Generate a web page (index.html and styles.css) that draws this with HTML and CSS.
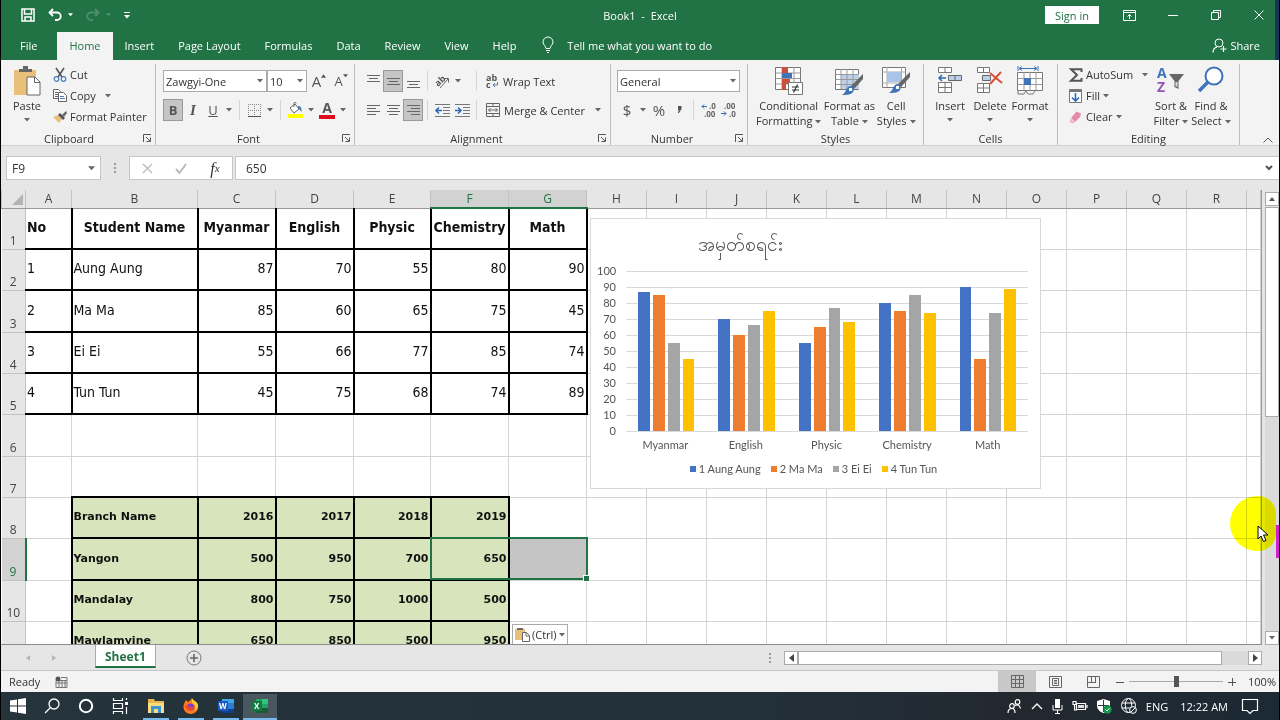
FILE: index.html
```html
<!DOCTYPE html>
<html lang="en">
<head>
    <meta charset="UTF-8">
    <meta name="viewport" content="width=device-width, initial-scale=1.0">
    <title>Book1 - Excel</title>
    <link rel="stylesheet" href="styles.css">
</head>
<body>
    <svg class="defs" aria-hidden="true">
        <symbol id="caret" viewBox="0 0 6 4"><path d="M0 0h6L3 3.5z"/></symbol>
        <symbol id="launcher" viewBox="0 0 9 9"><path d="M.5 8V.5H8M3 3l4 4M7.5 3.5v4h-4" fill="none" stroke="#555"/></symbol>
    </svg>

    <header class="title-bar">
        <div class="quick-access">
            <button class="qa-btn" aria-label="Save"><svg width="14" height="14" viewBox="0 0 14 14"><path d="M1 1h12v12H1zM3.500 1v5h7V1M4 13V9h6v4" fill="none" stroke="#fff" stroke-width="1.500"/></svg></button>
            <button class="qa-btn" aria-label="Undo"><svg width="14" height="14" viewBox="0 0 14 14"><path d="M5 1L1.500 4.500 5 8M2 4.500h7a3.500 3.500 0 0 1 0 7.500H7" fill="none" stroke="#fff" stroke-width="1.800"/></svg><svg class="caret" width="5" height="4"><use href="#caret"/></svg></button>
            <button class="qa-btn faded" aria-label="Redo"><svg width="14" height="14" viewBox="0 0 14 14"><path d="M9 1l3.500 3.500L9 8M12 4.500H5A3.500 3.500 0 0 0 5 12h2" fill="none" stroke="#fff" stroke-width="1.800"/></svg><svg class="caret" width="5" height="4"><use href="#caret"/></svg></button>
            <button class="qa-btn" aria-label="Customize toolbar"><svg width="6" height="7" viewBox="0 0 6 7"><path d="M0 0h6v1H0zM0 3h6L3 6.500z" fill="#fff"/></svg></button>
        </div>
        <div class="doc-title">Book1&nbsp; -&nbsp; Excel</div>
        <div class="window-tools">
            <button class="sign-in">Sign in</button>
            <button class="win-btn" aria-label="Ribbon options"><svg width="13" height="11" viewBox="0 0 13 11"><path d="M.5.5h12v10H.5zM.5 2.500h12M6.500 9V4.500M4.500 6.500l2-2 2 2" fill="none" stroke="#fff"/></svg></button>
            <button class="win-btn" aria-label="Minimize"><svg width="10" height="10" viewBox="0 0 10 10"><path d="M0 5.500h10" stroke="#fff"/></svg></button>
            <button class="win-btn" aria-label="Restore"><svg width="10" height="10" viewBox="0 0 10 10"><path d="M.5 2.500h7v7h-7zM2.500 2.500v-2h7v7h-2" fill="none" stroke="#fff"/></svg></button>
            <button class="win-btn" aria-label="Close"><svg width="10" height="10" viewBox="0 0 10 10"><path d="M.5.5l9 9M9.500.5l-9 9" stroke="#fff"/></svg></button>
        </div>
    </header>

    <nav class="tabs">
        <a href="#" class="file">File</a>
        <a href="#" class="active">Home</a>
        <a href="#">Insert</a>
        <a href="#">Page Layout</a>
        <a href="#">Formulas</a>
        <a href="#">Data</a>
        <a href="#">Review</a>
        <a href="#">View</a>
        <a href="#">Help</a>
        <button class="tell-me"><svg width="12" height="16" viewBox="0 0 12 16"><path d="M4 11.500C4 9 1 8 1 5a5 5 0 0 1 10 0c0 3-3 4-3 6.500zM4 13.500h4M5 15.500h2" fill="none" stroke="#fff"/></svg>Tell me what you want to do</button>
        <button class="share"><svg width="15" height="15" viewBox="0 0 15 15"><circle cx="7" cy="5" r="4" fill="none" stroke="#fff"/><path d="M1 14.500c0-3 2-5 4-5.500M11.500 8v6M8.500 11h6" fill="none" stroke="#fff" stroke-width="1.200"/></svg>Share</button>
    </nav>

    <section class="ribbon">
        <div class="group clipboard">
            <div class="group-body">
                <button class="big">
                    <svg width="28" height="30" viewBox="0 0 28 30"><path d="M1 4h22v25H1z" fill="#e8c07a"/><path d="M6 6V3h4V0h5v3h4v3z" fill="#666"/><path d="M14 11h8l5 5v13H14z" fill="#fff" stroke="#666"/><path d="M21.500 11v5.500H27" fill="none" stroke="#666"/></svg>
                    <span>Paste</span>
                    <svg class="caret" width="6" height="4"><use href="#caret"/></svg>
                </button>
                <div class="stack">
                    <button class="line"><svg width="14" height="14" viewBox="0 0 14 14"><path d="M3 0l6 9M11 0L5 9" stroke="#555" stroke-width="1.600"/><circle cx="3.500" cy="11" r="2.300" fill="none" stroke="#4a7ebb" stroke-width="1.200"/><circle cx="10.500" cy="11" r="2.300" fill="none" stroke="#4a7ebb" stroke-width="1.200"/></svg>Cut</button>
                    <button class="line"><svg width="14" height="13" viewBox="0 0 14 13"><path d="M.5.5h5l2 2v7h-7zM2 3.500h3M2 5.500h3M2 7.500h3" fill="#fff" stroke="#666"/><path d="M5.500 3.500h5l3 3v6h-8z" fill="#fff" stroke="#666"/><path d="M7 7.500h4M7 9.500h5" stroke="#4a7ebb"/></svg>Copy<svg class="caret far" width="6" height="4"><use href="#caret"/></svg></button>
                    <button class="line"><svg width="14" height="12" viewBox="0 0 14 12"><path d="M0 6l5-2 4 4-3 4z" fill="#e8c07a"/><path d="M5 4l2-2 5 5-2 2z" fill="#555"/><path d="M9 4l4-4 1 2-3 4z" fill="#666"/></svg>Format Painter</button>
                </div>
            </div>
            <div class="group-name">Clipboard<svg class="launch" width="9" height="9"><use href="#launcher"/></svg></div>
        </div>

        <div class="group font">
            <div class="group-body rows">
                <div class="tool-row">
                    <span class="combo font-name"><select aria-label="Font"><option>Zawgyi-One</option></select><svg class="caret" width="6" height="4"><use href="#caret"/></svg></span>
                    <span class="combo font-size"><select aria-label="Font size"><option>10</option></select><svg class="caret" width="6" height="4"><use href="#caret"/></svg></span>
                    <button class="tool grow" aria-label="Increase font size"><span class="letter">A</span><svg width="5" height="4" viewBox="0 0 6 4"><path d="M0 4h6L3 0z" fill="#555"/></svg></button>
                    <button class="tool grow small" aria-label="Decrease font size"><span class="letter">A</span><svg width="5" height="4"><use href="#caret"/></svg></button>
                </div>
                <div class="tool-row">
                    <button class="tool on"><b>B</b></button>
                    <button class="tool"><i class="serif">I</i></button>
                    <button class="tool"><u>U</u></button>
                    <button class="drop" aria-label="Underline style"><svg class="caret" width="6" height="4"><use href="#caret"/></svg></button>
                    <span class="sep"></span>
                    <button class="tool" aria-label="Borders"><svg width="13" height="13" viewBox="0 0 13 13"><path d="M.5 0v12M6.500 0v12M12.500 0v12M0 .5h13M0 6.500h13" stroke="#888" stroke-dasharray="1 1" fill="none"/><path d="M0 12.500h13" stroke="#555"/></svg></button>
                    <button class="drop" aria-label="Border style"><svg class="caret" width="6" height="4"><use href="#caret"/></svg></button>
                    <span class="sep"></span>
                    <button class="tool" aria-label="Fill color"><svg width="15" height="16" viewBox="0 0 15 16"><path d="M2 6l5-4 4 5-5 4z" fill="#fff" stroke="#666"/><path d="M6 5V1.500c0-1.500 2-1.500 2 0" fill="none" stroke="#666"/><path d="M10 4c3 0 4 2 3.500 6C12 9 12 7 10 6z" fill="#4a7ebb"/><path d="M0 12h15v4H0z" fill="#ff0"/></svg></button>
                    <button class="drop" aria-label="Fill colors"><svg class="caret" width="6" height="4"><use href="#caret"/></svg></button>
                    <button class="tool font-color" aria-label="Font color"><b>A</b></button>
                    <button class="drop" aria-label="Font colors"><svg class="caret" width="6" height="4"><use href="#caret"/></svg></button>
                </div>
            </div>
            <div class="group-name">Font<svg class="launch" width="9" height="9"><use href="#launcher"/></svg></div>
        </div>

        <div class="group alignment">
            <div class="group-body rows">
                <div class="tool-row">
                    <button class="tool" aria-label="Top align"><svg width="13" height="13" viewBox="0 0 13 13"><path d="M0 .5h13M2 3.500h9M0 6.500h13" stroke="#666"/></svg></button>
                    <button class="tool on" aria-label="Middle align"><svg width="13" height="13" viewBox="0 0 13 13"><path d="M0 3.500h13M2 6.500h9M0 9.500h13" stroke="#666"/></svg></button>
                    <button class="tool" aria-label="Bottom align"><svg width="13" height="13" viewBox="0 0 13 13"><path d="M0 6.500h13M2 9.500h9M0 12.500h13" stroke="#666"/></svg></button>
                    <span class="sep"></span>
                    <button class="tool" aria-label="Orientation"><svg width="16" height="15" viewBox="0 0 16 15"><text x="1" y="11" transform="rotate(-42 5 8)" class="ab">ab</text><path d="M6 14l8-9M14.500 8.500V4.500h-4" fill="none" stroke="#666"/></svg></button>
                    <button class="drop" aria-label="Orientation list"><svg class="caret" width="6" height="4"><use href="#caret"/></svg></button>
                    <span class="sep wide"></span>
                    <button class="line"><svg width="13" height="15" viewBox="0 0 13 15"><text x="0" y="7" class="ab">ab</text><text x="0" y="14" class="ab">c</text><path d="M11.500 8v3H7M9 9l-2 2 2 2" fill="none" stroke="#4a7ebb"/></svg>Wrap Text</button>
                </div>
                <div class="tool-row">
                    <button class="tool" aria-label="Align left"><svg width="13" height="13" viewBox="0 0 13 13"><path d="M0 1.500h13M0 4.500h9M0 7.500h13M0 10.500h9" stroke="#666"/></svg></button>
                    <button class="tool" aria-label="Center"><svg width="13" height="13" viewBox="0 0 13 13"><path d="M0 1.500h13M2 4.500h9M0 7.500h13M2 10.500h9" stroke="#666"/></svg></button>
                    <button class="tool on" aria-label="Align right"><svg width="13" height="13" viewBox="0 0 13 13"><path d="M0 1.500h13M4 4.500h9M0 7.500h13M4 10.500h9" stroke="#666"/></svg></button>
                    <span class="sep"></span>
                    <button class="tool" aria-label="Decrease indent"><svg width="15" height="13" viewBox="0 0 15 13"><path d="M0 .5h15M8 3.500h7M8 6.500h7M8 9.500h7M0 12.500h15" stroke="#777"/><path d="M7 6.500H1M4 3.500l-3 3 3 3" fill="none" stroke="#2f6ab5" stroke-width="1.600"/></svg></button>
                    <button class="tool" aria-label="Increase indent"><svg width="15" height="13" viewBox="0 0 15 13"><path d="M0 .5h15M8 3.500h7M8 6.500h7M8 9.500h7M0 12.500h15" stroke="#777"/><path d="M0 6.500h6M3 3.500l3 3-3 3" fill="none" stroke="#2f6ab5" stroke-width="1.600"/></svg></button>
                    <span class="sep"></span>
                    <button class="line"><svg width="14" height="14" viewBox="0 0 14 14"><path d="M.5.5h13v13H.5zM.5 3.500h13M.5 10.500h13M7 0v3.500M7 10.500V14M2.500 7h9M4.500 5l-2 2 2 2M9.500 5l2 2-2 2" fill="none" stroke="#666"/></svg>Merge &amp; Center<svg class="caret far" width="6" height="4"><use href="#caret"/></svg></button>
                </div>
            </div>
            <div class="group-name">Alignment<svg class="launch" width="9" height="9"><use href="#launcher"/></svg></div>
        </div>

        <div class="group number">
            <div class="group-body rows">
                <div class="tool-row">
                    <span class="combo format"><select aria-label="Number format"><option>General</option></select><svg class="caret" width="6" height="4"><use href="#caret"/></svg></span>
                </div>
                <div class="tool-row">
                    <button class="tool sign">$</button>
                    <button class="drop" aria-label="Currency list"><svg class="caret" width="6" height="4"><use href="#caret"/></svg></button>
                    <button class="tool sign">%</button>
                    <button class="tool" aria-label="Comma style"><svg width="5" height="8" viewBox="0 0 5 8"><path d="M1 0h3.500v3L2 7H.8l1-3H1z" fill="#555"/></svg></button>
                    <span class="sep"></span>
                    <button class="tool" aria-label="Increase decimal"><svg width="15" height="14" viewBox="0 0 15 14"><text x="8" y="6" class="dec">.0</text><text x="3" y="14" class="dec">.00</text><path d="M6 3.500H1M3 1.500l-2 2 2 2" fill="none" stroke="#2f6ab5"/></svg></button>
                    <button class="tool" aria-label="Decrease decimal"><svg width="15" height="14" viewBox="0 0 15 14"><text x="3" y="6" class="dec">.00</text><text x="8" y="14" class="dec">.0</text><path d="M0 10.500h5M3 8.500l2 2-2 2" fill="none" stroke="#2f6ab5"/></svg></button>
                </div>
            </div>
            <div class="group-name">Number<svg class="launch" width="9" height="9"><use href="#launcher"/></svg></div>
        </div>

        <div class="group styles">
            <div class="group-body">
                <button class="big">
                    <svg width="28" height="30" viewBox="0 0 28 30"><path d="M.5 1.500h25v22H.5z" fill="#fff" stroke="#777"/><path d="M.5 7h25M.5 12.500h25M.5 18h25M7 1v22M19 1v22" stroke="#999"/><path d="M7 1h6v6H7zM7 13h8v5H7zM7 18h4v6H7z" fill="#c9503c"/><path d="M7 7h10v5H7z" fill="#3f74b8"/><path d="M13.500 16.500h14v12h-14z" fill="#fff" stroke="#777"/><path d="M17 21h7M17 24h7M22.500 18.500l-4 8" stroke="#333" stroke-width="1.200"/></svg>
                    <span>Conditional</span>
                    <span>Formatting<svg class="caret" width="6" height="4"><use href="#caret"/></svg></span>
                </button>
                <button class="big">
                    <svg width="28" height="30" viewBox="0 0 28 30"><path d="M.5 3.500h23v20H.5z" fill="#fff" stroke="#777"/><path d="M6 8h18v15H6z" fill="#bdd0e9"/><path d="M.5 8.500h23M.5 13.500h23M.5 18.500h23M6 3v20M12 3v20M18 3v20" stroke="#999"/><path d="M28 8v5l-9 10-3-3z" fill="#666"/><path d="M15 20c3 0 5 3 3 6s-7 3-11 3c4-2 4-8 8-9z" fill="#3f74b8"/><path d="M14 22h3v3h-3z" fill="#fff"/></svg>
                    <span>Format as</span>
                    <span>Table<svg class="caret" width="6" height="4"><use href="#caret"/></svg></span>
                </button>
                <button class="big">
                    <svg width="28" height="30" viewBox="0 0 28 30"><path d="M.5 1.500h23v20H.5z" fill="#fff" stroke="#777"/><path d="M.5 6h23M.5 17h23M5 1v20M19.500 1v20" stroke="#aaa"/><path d="M5 6h14v10H5z" fill="#a9c4e6"/><path d="M28 6v5l-9 10-3-3z" fill="#666"/><path d="M15 18c3 0 5 3 3 6s-7 3-11 3c4-2 4-8 8-9z" fill="#3f74b8"/><path d="M14 20h3v3h-3z" fill="#fff"/></svg>
                    <span>Cell</span>
                    <span>Styles<svg class="caret" width="6" height="4"><use href="#caret"/></svg></span>
                </button>
            </div>
            <div class="group-name">Styles</div>
        </div>

        <div class="group cells">
            <div class="group-body">
                <button class="big">
                    <svg width="26" height="30" viewBox="0 0 26 30"><path d="M1.500 1.500h13v5h-13zM8 1v5M1.500 16.500h13v10h-13zM1.500 21.500h13M8 16v10" fill="#fff" stroke="#777"/><path d="M11.500 9.500h13v5h-13zM18 9v5" fill="#bdd0e9" stroke="#666"/><path d="M9 12H2M5 9l-3 3 3 3" fill="none" stroke="#2f6ab5" stroke-width="1.500"/></svg>
                    <span>Insert</span>
                    <svg class="caret" width="6" height="4"><use href="#caret"/></svg>
                </button>
                <button class="big">
                    <svg width="26" height="30" viewBox="0 0 26 30"><path d="M.5 1.500h12v5H.5zM6.500 1v5M.5 17.500h12v9H.5zM.5 22h12M6.500 17v9" fill="#fff" stroke="#777"/><path d="M5.500 9.500h8v5h-8z" fill="#bdd0e9" stroke="#666"/><path d="M13 7l12 10M24 6L13 18" stroke="#d9503a" stroke-width="2"/></svg>
                    <span>Delete</span>
                    <svg class="caret" width="6" height="4"><use href="#caret"/></svg>
                </button>
                <button class="big">
                    <svg width="26" height="30" viewBox="0 0 26 30"><path d="M.5 6.500h25v18H.5z" fill="#fff" stroke="#777"/><path d="M.5 12.500h25M.5 18.500h25M7 6v18M13 6v18M19 6v18" stroke="#999"/><path d="M7 12h7v7H7z" fill="#3f74b8"/><path d="M1 25v3h6l2-3 2 3h5l2-3" fill="none" stroke="#777"/><path d="M1 0v5M21 0v5M2 2.500h18M5 .5l-3 2 3 2M17 .5l3 2-3 2" fill="none" stroke="#3f74b8"/></svg>
                    <span>Format</span>
                    <svg class="caret" width="6" height="4"><use href="#caret"/></svg>
                </button>
            </div>
            <div class="group-name">Cells</div>
        </div>

        <div class="group editing">
            <div class="group-body">
                <div class="stack">
                    <button class="line"><svg width="14" height="14" viewBox="0 0 14 14"><path d="M12.500 4V1.200H2L8 7l-6 5.800h10.500V10" fill="none" stroke="#555" stroke-width="2"/></svg>AutoSum<svg class="caret far" width="6" height="4"><use href="#caret"/></svg></button>
                    <button class="line"><svg width="14" height="14" viewBox="0 0 14 14"><path d="M.5.5h12v13H.5z" fill="#fff" stroke="#777"/><path d="M1 1h11v2H1z" fill="#777"/><path d="M6.500 4v8M3 8.500L6.500 12 10 8.500" fill="none" stroke="#2f6ab5" stroke-width="1.600"/></svg>Fill<svg class="caret" width="6" height="4"><use href="#caret"/></svg></button>
                    <button class="line"><svg width="14" height="14" viewBox="0 0 14 14"><path d="M7.500 1.500L12 3.500 11 7l-5 5-4-4z" fill="#e58ba6"/><path d="M1.500 8.500l4 4-1 1-3.500-1z" fill="#eeb4c4"/></svg>Clear<svg class="caret" width="6" height="4"><use href="#caret"/></svg></button>
                </div>
                <button class="big">
                    <svg width="28" height="30" viewBox="0 0 28 30"><text x="0" y="12" class="sort-a">A</text><text x="0" y="26" class="sort-z">Z</text><path d="M12 8h15l-5.500 7v8l-4-2v-6z" fill="#666"/><path d="M18.500 16h2v5l-2-1z" fill="#ddd"/></svg>
                    <span>Sort &amp;</span>
                    <span>Filter<svg class="caret" width="6" height="4"><use href="#caret"/></svg></span>
                </button>
                <button class="big">
                    <svg width="28" height="30" viewBox="0 0 28 30"><circle cx="17" cy="10" r="8.500" fill="#fff" stroke="#3f74b8" stroke-width="2"/><path d="M11 16l-9 9" stroke="#3f74b8" stroke-width="3.500"/></svg>
                    <span>Find &amp;</span>
                    <span>Select<svg class="caret" width="6" height="4"><use href="#caret"/></svg></span>
                </button>
            </div>
            <div class="group-name">Editing</div>
        </div>
        <button class="collapse" aria-label="Collapse ribbon"><svg width="10" height="6" viewBox="0 0 10 6"><path d="M.5 5.500L5 1l4.500 4.500" fill="none" stroke="#555"/></svg></button>
    </section>

    <section class="formula-bar">
        <div class="name-box"><input type="text" value="F9" aria-label="Name box"><svg class="caret" width="7" height="5"><use href="#caret"/></svg></div>
        <span class="dots"></span>
        <div class="entry-tools">
            <button aria-label="Cancel"><svg width="11" height="11" viewBox="0 0 11 11"><path d="M1 1l9 9M10 1l-9 9" stroke="#bbb" stroke-width="1.400"/></svg></button>
            <button aria-label="Enter"><svg width="12" height="11" viewBox="0 0 12 11"><path d="M1 6l3.500 4L11 1" fill="none" stroke="#bbb" stroke-width="2"/></svg></button>
            <button class="fx"><i>f</i><sub>x</sub></button>
        </div>
        <div class="formula"><input type="text" value="650" aria-label="Formula"><svg width="8" height="6" viewBox="0 0 8 6"><path d="M1 1l3 3 3-3" fill="none" stroke="#555" stroke-width="2"/></svg></div>
    </section>

    <main class="workspace">
        <div class="sheet">
            <table class="grid" id="grid">
                <colgroup>
                    <col class="col-head"><col class="col-a"><col class="col-b">
                    <col class="col-mark"><col class="col-mark"><col class="col-mark narrow"><col class="col-mark"><col class="col-mark">
                    <col span="11" class="col-std"><col>
                </colgroup>
                <thead>
                    <tr><th class="corner"><svg width="11" height="11" viewBox="0 0 11 11"><path d="M11 0v11H0z" fill="#b3b3b3"/></svg></th><th>A</th><th>B</th><th>C</th><th>D</th><th>E</th><th class="picked">F</th><th class="picked">G</th><th>H</th><th>I</th><th>J</th><th>K</th><th>L</th><th>M</th><th>N</th><th>O</th><th>P</th><th>Q</th><th>R</th><th></th></tr>
                </thead>
                <tbody>
                    <tr class="marks titles"><th>1</th><td class="text">No</td><td>Student Name</td><td>Myanmar</td><td>English</td><td>Physic</td><td>Chemistry</td><td>Math</td></tr>
                    <tr class="marks"><th>2</th><td class="text">1</td><td class="text">Aung Aung</td><td>87</td><td>70</td><td>55</td><td>80</td><td>90</td></tr>
                    <tr class="marks"><th>3</th><td class="text">2</td><td class="text">Ma Ma</td><td>85</td><td>60</td><td>65</td><td>75</td><td>45</td></tr>
                    <tr class="marks"><th>4</th><td class="text">3</td><td class="text">Ei Ei</td><td>55</td><td>66</td><td>77</td><td>85</td><td>74</td></tr>
                    <tr class="marks"><th>5</th><td class="text">4</td><td class="text">Tun Tun</td><td>45</td><td>75</td><td>68</td><td>74</td><td>89</td></tr>
                    <tr><th>6</th></tr>
                    <tr><th>7</th></tr>
                    <tr class="branch"><th>8</th><td></td><td class="text">Branch Name</td><td>2016</td><td>2017</td><td>2018</td><td>2019</td></tr>
                    <tr class="branch"><th class="picked">9</th><td></td><td class="text">Yangon</td><td>500</td><td>950</td><td>700</td><td>650</td><td class="shaded"></td></tr>
                    <tr class="branch"><th>10</th><td></td><td class="text">Mandalay</td><td>800</td><td>750</td><td>1000</td><td>500</td></tr>
                    <tr class="branch"><th>11</th><td></td><td class="text">Mawlamyine</td><td>650</td><td>850</td><td>500</td><td>950</td></tr>
                </tbody>
            </table>

            <div class="selection"></div>
            <button class="paste-options"><svg width="15" height="15" viewBox="0 0 15 15"><path d="M0 2h10v11H0z" fill="#e8c07a"/><path d="M2 3V1h6v2z" fill="#666"/><path d="M7.500 5.500h4l3 3v6h-7zM11 5.500v3.500h3.500" fill="#fff" stroke="#666"/></svg>(Ctrl)<svg class="caret" width="6" height="4"><use href="#caret"/></svg></button>

            <figure class="chart">
                <figcaption>အမှတ်စရင်း</figcaption>
                <div class="plot-row">
                    <div class="axis"><span>100</span><span>90</span><span>80</span><span>70</span><span>60</span><span>50</span><span>40</span><span>30</span><span>20</span><span>10</span><span>0</span></div>
                    <div class="plot" id="plot"></div>
                </div>
                <div class="categories"><span>Myanmar</span><span>English</span><span>Physic</span><span>Chemistry</span><span>Math</span></div>
                <div class="legend"><span class="s1">1 Aung Aung</span><span class="s2">2 Ma Ma</span><span class="s3">3 Ei Ei</span><span class="s4">4 Tun Tun</span></div>
            </figure>
        </div>
        <div class="v-scroll">
            <button aria-label="Scroll up"><svg width="8" height="4" viewBox="0 0 6 4"><path d="M0 4h6L3 0z" fill="#555"/></svg></button>
            <div class="v-thumb"></div>
            <div class="v-track"></div>
            <button aria-label="Scroll down"><svg class="caret" width="8" height="4"><use href="#caret"/></svg></button>
        </div>
        <div class="spotlight"></div>
        <div class="marker"></div>
        <svg class="pointer" width="13" height="18" viewBox="0 0 13 18"><path d="M1 1v13l3-3 2.500 5.500 2.500-1L6.500 10H11z" fill="#fff" stroke="#000"/></svg>
    </main>

    <div class="sheet-bar">
        <div class="sheet-nav">
            <button aria-label="Previous sheet"><svg width="4" height="6" viewBox="0 0 4 6"><path d="M4 0v6L0 3z" fill="#b5b5b5"/></svg></button>
            <button aria-label="Next sheet"><svg width="4" height="6" viewBox="0 0 4 6"><path d="M0 0v6l4-3z" fill="#b5b5b5"/></svg></button>
        </div>
        <a href="#" class="sheet-tab">Sheet1</a>
        <button class="add-sheet" aria-label="New sheet"><svg width="16" height="16" viewBox="0 0 16 16"><circle cx="8" cy="8" r="7" fill="none" stroke="#777"/><path d="M8 4v8M4 8h8" stroke="#666" stroke-width="1.600"/></svg></button>
        <span class="dots"></span>
        <div class="h-scroll">
            <button aria-label="Scroll left"><svg width="5" height="8" viewBox="0 0 5 8"><path d="M5 0v8L0 4z" fill="#444"/></svg></button>
            <div class="h-thumb"></div>
            <div class="h-track"></div>
            <button aria-label="Scroll right"><svg width="5" height="8" viewBox="0 0 5 8"><path d="M0 0v8l5-4z" fill="#444"/></svg></button>
        </div>
    </div>

    <footer class="status-bar">
        <span class="ready">Ready</span>
        <svg width="13" height="12" viewBox="0 0 13 12"><path d="M1 4.500h11v7H1zM1 7h11M4 5v6M7 5v6M10 5v6M6 1.500h6v3" fill="none" stroke="#777"/><circle cx="3" cy="3" r="2.500" fill="#555"/></svg>
        <div class="views">
            <button class="on" aria-label="Normal view"><svg width="13" height="13" viewBox="0 0 13 13"><path d="M.5.5h12v12H.5zM4.500 0v13M8.500 0v13M0 4.500h13M0 8.500h13" fill="none" stroke="#666"/></svg></button>
            <button aria-label="Page layout view"><svg width="13" height="12" viewBox="0 0 13 12"><path d="M.5.5h12v11H.5zM3.500 2.500h6v7h-6zM5 4.500h3M5 6h3M5 7.500h3" fill="none" stroke="#666"/></svg></button>
            <button aria-label="Page break view"><svg width="13" height="12" viewBox="0 0 13 12"><path d="M.5.5h12v11H.5zM4.500 0v6.500M8.500 0v6.500M0 6.500h9" fill="none" stroke="#666"/></svg></button>
        </div>
        <div class="zoom">
            <button aria-label="Zoom out"><svg width="8" height="8" viewBox="0 0 8 8"><path d="M0 4.500h8" stroke="#555"/></svg></button>
            <input type="range" min="0" max="100" value="50" aria-label="Zoom">
            <button aria-label="Zoom in"><svg width="8" height="8" viewBox="0 0 8 8"><path d="M0 4.500h8M4.500 0v8" stroke="#555"/></svg></button>
            <span>100%</span>
        </div>
    </footer>

    <div class="taskbar">
        <div class="apps">
            <button aria-label="Start"><svg width="16" height="16" viewBox="0 0 16 16"><path d="M0 2.500l7-1v6H0zM8 1.300L16 0v7.500H8zM0 8.500h7v6l-7-1zM8 8.500h8V16l-8-1.300z" fill="#fff"/></svg></button>
            <button aria-label="Search"><svg width="16" height="16" viewBox="0 0 16 16"><circle cx="10" cy="6" r="5" fill="none" stroke="#fff" stroke-width="1.300"/><path d="M6.500 9.500L1 15" stroke="#fff" stroke-width="1.300"/></svg></button>
            <button aria-label="Cortana"><svg width="16" height="16" viewBox="0 0 16 16"><circle cx="8" cy="8" r="6.200" fill="none" stroke="#fff" stroke-width="2"/></svg></button>
            <button aria-label="Task view"><svg width="16" height="16" viewBox="0 0 16 16"><path d="M1.500 0v2.500h9V0M1.500 5.500h9v5h-9zM1.500 16v-2.500h9V16M14.500 0v2M14.500 9v7" fill="none" stroke="#fff" stroke-width="1.200"/><path d="M13 4h3v3h-3z" fill="#fff"/></svg></button>
            <button class="open" aria-label="File Explorer"><svg width="16" height="14" viewBox="0 0 16 14"><path d="M0 0h6l1 2h9v12H0z" fill="#e9b64a"/><path d="M0 4h16v10H0z" fill="#fbdc83"/><path d="M3 14V7h10v7h-3v-4H6v4z" fill="#3a96d0"/></svg></button>
            <button class="open" aria-label="Firefox"><svg width="16" height="16" viewBox="0 0 16 16"><path d="M3 2l2 2c2-1 3-3 4-4 1 3 5 3 6 7 1 5-3 9-7 9-5 0-8-4-7.500-8C1 5 2 4 3 2z" fill="#ff7a1f"/><path d="M9 0c1 3 5 3 6 7 0 3-1 5-3 6 1-4 0-7-3-8z" fill="#ffcb36"/><circle cx="7.500" cy="9" r="3.600" fill="#7a3fd0"/><path d="M2 8c2-2 4 0 5 1s3 0 4 0c-1 4-7 5-9-1z" fill="#f0452a"/></svg></button>
            <button class="open" aria-label="Word"><svg width="16" height="16" viewBox="0 0 16 16"><path d="M4 1h12v14H4z" fill="#2b7cd3"/><path d="M4 1h12v4H4z" fill="#41a5ee"/><path d="M4 11h12v4H4z" fill="#103f91"/><path d="M0 3h10v10H0z" fill="#185abd"/><text x="1" y="11" class="app-letter">W</text></svg></button>
            <button class="open current" aria-label="Excel"><svg width="16" height="16" viewBox="0 0 16 16"><path d="M4 1h12v14H4z" fill="#21a366"/><path d="M10 1h6v5h-6z" fill="#33c481"/><path d="M4 10h12v5H4z" fill="#185c37"/><path d="M0 3h10v10H0z" fill="#107c41"/><text x="2" y="11" class="app-letter">X</text></svg></button>
        </div>
        <div class="tray">
            <svg width="15" height="15" viewBox="0 0 15 15"><g fill="none" stroke="#fff" stroke-width="1.200"><circle cx="10.500" cy="3" r="2.300"/><circle cx="5" cy="7" r="2.300"/><path d="M1 14c0-3 2-4.500 4-4.500S8 11 8 14M8 6.500c2-1.500 5 0 5.500 3"/></g></svg>
            <svg width="12" height="7" viewBox="0 0 12 7"><path d="M1 6l5-5 5 5" fill="none" stroke="#fff" stroke-width="1.300"/></svg>
            <svg width="11" height="15" viewBox="0 0 11 15"><path d="M3 0h5v9H3z" fill="#fff"/><path d="M1 6v5h9V6M5.500 11v3M3 14.500h5" fill="none" stroke="#fff"/></svg>
            <svg width="16" height="12" viewBox="0 0 16 12"><path d="M4.500 3.500h9v6h-9zM15 5v3M1 1.500h3v3H1zM2.500 4.500V10H5" fill="none" stroke="#fff" stroke-width="1.200"/><path d="M6 5h6v3H6z" fill="#ddd"/></svg>
            <svg width="15" height="15" viewBox="0 0 15 15"><path d="M6.500 0L13 2v5c0 3-3 6-6.500 7C3 13 0 10 0 7V2z" fill="#fff"/><path d="M6.500 1v12M1 6.500h11" stroke="#333"/><circle cx="10.500" cy="10.500" r="4.300" fill="#13934b"/><path d="M8.500 10.500l1.500 1.500 2.500-3" fill="none" stroke="#fff"/></svg>
            <svg width="16" height="16" viewBox="0 0 16 16"><g fill="none" stroke="#fff"><circle cx="7.500" cy="7.500" r="7"/><ellipse cx="7.500" cy="7.500" rx="3.200" ry="7"/><path d="M1 5h13M1 10h13"/></g><circle cx="12" cy="12" r="3.400" fill="#25313a" stroke="#fff"/><path d="M10 14l4-4" stroke="#fff"/></svg>
            <span class="lang">ENG</span>
            <span class="clock">12:22 AM</span>
            <svg width="16" height="15" viewBox="0 0 16 15"><path d="M.5.5h15v11H11L8 14.500 5 11.500H.5z" fill="none" stroke="#fff" stroke-width="1.200"/></svg>
        </div>
    </div>

    <script>
        // fill the rest of each row with empty cells
        const columns = document.querySelectorAll('#grid thead th').length;
        document.querySelectorAll('#grid tbody tr').forEach(row => {
            while (row.cells.length < columns) {
                row.insertCell();
            }
        });

        const scores = [
            [87, 85, 55, 45],
            [70, 60, 66, 75],
            [55, 65, 77, 68],
            [80, 75, 85, 74],
            [90, 45, 74, 89]
        ];
        const plot = document.getElementById('plot');
        scores.forEach(subject => {
            const cluster = document.createElement('div');
            cluster.className = 'cluster';
            subject.forEach((score, i) => {
                const bar = document.createElement('div');
                bar.className = 'bar s' + (i + 1);
                bar.style.height = score + '%';
                cluster.appendChild(bar);
            });
            plot.appendChild(cluster);
        });
    </script>
</body>
</html>
```
FILE: styles.css
```css
* {
    box-sizing: border-box;
}

body {
    margin: 0;
    height: 100vh;
    overflow: hidden;
    display: flex;
    flex-direction: column;
    border-left: 1px solid #000;
    border-right: 1px solid #000;
    font-family: "Open Sans", "Noto Sans", sans-serif;
    font-size: 11px;
    line-height: 15px;
    color: #333;
    background: #e6e6e6;
}

button,
input,
select {
    font: inherit;
    color: inherit;
    margin: 0;
    padding: 0;
    border: none;
    background: none;
}

button {
    display: flex;
    align-items: center;
    justify-content: center;
    cursor: pointer;
}

a {
    color: inherit;
    text-decoration: none;
}

svg {
    flex: none;
    display: block;
    overflow: visible;
}

.defs {
    display: none;
}

.caret {
    fill: #666;
}

/* title bar */
.title-bar {
    height: 30px;
    display: grid;
    grid-template-columns: 1fr auto 1fr;
    align-items: center;
    background: #217346;
    border-right: 4px solid #1c3556;
    color: #fff;
}

.quick-access {
    display: flex;
    align-items: center;
    gap: 13px;
    padding-left: 20px;
}

.qa-btn {
    gap: 6px;
}

.qa-btn .caret {
    fill: #fff;
}

.faded {
    opacity: 0.2;
}

.doc-title {
    padding-left: 4px;
}

.window-tools {
    display: flex;
    justify-content: flex-end;
    align-items: center;
}

.sign-in {
    width: 54px;
    height: 18px;
    margin-right: 9px;
    background: #fff;
    color: #217346;
}

.win-btn {
    width: 43px;
    height: 30px;
}

.win-btn:last-child {
    margin-right: -5px;
}

/* ribbon tabs */
.tabs {
    height: 30px;
    display: flex;
    align-items: stretch;
    background: #217346;
    border-right: 4px solid #1c3556;
    color: #fff;
}

.tabs a {
    display: flex;
    align-items: center;
    padding: 0 12px;
}

.tabs .file {
    padding: 0 20px 0 19px;
}

.tabs .active {
    margin-top: 2px;
    padding-bottom: 2px;
    background: #f3f3f3;
    color: #217346;
}

.tell-me {
    gap: 13px;
    margin-left: 14px;
}

.share {
    gap: 3px;
    margin-left: auto;
    padding-right: 15px;
}

/* ribbon */
.ribbon {
    display: flex;
    height: 86px;
    padding: 4px 0 0;
    background: #f3f3f3;
    border-bottom: 1px solid #d2d2d2;
}

.group {
    display: flex;
    flex-direction: column;
    justify-content: space-between;
    border-right: 1px solid #bdbdbd;
}

.clipboard {
    width: 155px;
}

.font {
    width: 199px;
    padding-left: 7px;
}

.alignment {
    width: 256px;
    padding-left: 8px;
}

.number {
    width: 137px;
    padding-left: 6px;
}

.styles {
    width: 176px;
}

.cells {
    width: 134px;
}

.editing {
    width: 182px;
}

.group-body {
    display: flex;
    align-items: flex-start;
}

.rows {
    flex-direction: column;
    gap: 7px;
    padding-top: 6px;
}

.group-name {
    display: flex;
    align-items: center;
    justify-content: center;
    position: relative;
    height: 14px;
}

.clipboard .group-name {
    padding-right: 18px;
}

.font .group-name,
.alignment .group-name,
.number .group-name {
    padding-right: 20px;
}

.launch {
    position: absolute;
    right: 3px;
    top: 3px;
}

.big {
    flex-direction: column;
    justify-content: flex-start;
    padding-top: 2px;
    min-width: 40px;
}

.big > svg:first-child {
    margin-bottom: 2px;
}

.big .caret {
    margin-top: 5px;
}

.big span {
    display: flex;
    align-items: center;
    white-space: nowrap;
}

.big span .caret {
    margin: 2px 0 0 3px;
}

.clipboard .big {
    width: 52px;
}

.styles .big:nth-child(1) {
    width: 82px;
}

.styles .big:nth-child(2) {
    width: 40px;
}

.styles .big:nth-child(3) {
    width: 54px;
}

.cells .group-body {
    padding-left: 6px;
}

.editing .group-body {
    padding-left: 11px;
}

.editing .stack {
    width: 82px;
}

.stack {
    display: flex;
    flex-direction: column;
    align-items: flex-start;
}

.line {
    height: 21px;
    gap: 3px;
    white-space: nowrap;
}

.line .far {
    margin-left: 6px;
}

.alignment .line {
    gap: 4px;
    padding-left: 5px;
}

.tool-row {
    display: flex;
    align-items: center;
    height: 22px;
}

.tool {
    width: 20px;
    height: 22px;
    font-size: 13px;
    color: #555;
}

.tool.on {
    background: #c5c5c5;
    border: 1px solid #999;
}

.drop {
    width: 12px;
    height: 22px;
}

.serif {
    font-family: "Liberation Serif", serif;
    font-weight: bold;
    font-size: 15px;
}

.sep {
    width: 1px;
    height: 20px;
    margin: 0 4px;
    background: #d5d5d5;
}

.sep.wide {
    margin-left: 12px;
}

.grow {
    align-items: center;
    margin-left: 2px;
}

.grow svg {
    margin-bottom: 10px;
    fill: #555;
}

.letter {
    font-size: 15px;
}

.small .letter {
    font-size: 13px;
}

.font-color b {
    line-height: 14px;
    border-bottom: 4px solid #e00b1c;
    padding: 0 3px;
    font-size: 14px;
}

.sign {
    font-size: 15px;
}

.ab {
    font: bold 9px "Open Sans", sans-serif;
    fill: #555;
}

.dec {
    font: bold 8px "Open Sans", sans-serif;
    fill: #666;
}

.sort-a {
    font: bold 14px "Open Sans", sans-serif;
    fill: #3f74b8;
}

.sort-z {
    font: bold 14px "Open Sans", sans-serif;
    fill: #9455b8;
}

.combo {
    display: grid;
    align-items: center;
    height: 22px;
    background: #fff;
    border: 1px solid #ababab;
}

.combo select {
    grid-area: 1 / 1;
    appearance: none;
    width: 100%;
    padding-left: 2px;
    outline: none;
}

.combo .caret {
    grid-area: 1 / 1;
    justify-self: end;
    margin-right: 3px;
    pointer-events: none;
}

.font-name {
    width: 104px;
}

.font-size {
    width: 40px;
}

.format {
    width: 123px;
}

.collapse {
    align-self: flex-end;
    margin: 0 6px 0 auto;
    height: 10px;
}

/* formula bar */
.formula-bar {
    display: flex;
    align-items: center;
    height: 44px;
    padding-left: 5px;
    background: #e6e6e6;
    font-size: 12px;
}

.name-box,
.entry-tools,
.formula {
    display: flex;
    align-items: center;
    height: 24px;
    background: #fff;
    border: 1px solid #c6c6c6;
}

.name-box {
    width: 95px;
    padding: 0 5px;
}

.name-box input,
.formula input {
    flex: 1;
    min-width: 0;
    outline: none;
}

.dots {
    width: 2px;
    height: 10px;
    margin: 0 13px;
    background: repeating-linear-gradient(#999 0, #999 2px, transparent 2px, transparent 4px);
}

.entry-tools {
    width: 104px;
    margin-right: 2px;
}

.entry-tools button {
    flex: 1;
}

.fx {
    font-family: "Liberation Serif", serif;
    font-size: 16px;
}

.fx sub {
    font-size: 11px;
    font-style: italic;
}

.formula {
    flex: 1;
    padding: 0 6px 0 10px;
    border-right: none;
}

/* worksheet */
.workspace {
    position: relative;
    display: flex;
    flex: 1;
    min-height: 0;
}

.sheet {
    position: relative;
    flex: 1;
    min-width: 0;
    overflow: hidden;
    background: #fff;
    border-right: 1px solid #999;
    border-bottom: 1px solid #8c8c8c;
}

.grid {
    width: 100%;
    table-layout: fixed;
    border-collapse: collapse;
    font-family: "DejaVu Sans Condensed", "DejaVu Sans", sans-serif;
    font-size: 14px;
    color: #111;
}

.col-head {
    width: 24px;
}

.col-a {
    width: 46px;
}

.col-b {
    width: 126px;
}

.col-mark {
    width: 78px;
}

.col-mark.narrow {
    width: 77px;
}

.col-std {
    width: 60px;
}

.grid th {
    padding: 0;
    background: #e6e6e6;
    border: 1px solid #c3c3c3;
    border-top: none;
    font-family: "Open Sans", sans-serif;
    font-size: 12px;
    font-weight: normal;
    color: #444;
}

.grid thead th {
    height: 18px;
    border-bottom: 1px solid #999;
}

.grid thead .picked {
    background: #d2d2d2;
    border-bottom: 2px solid #217346;
    color: #217346;
}

.grid .corner svg {
    margin: 2px 0 0 10px;
}

.grid tbody tr {
    height: 41px;
}

.grid tbody tr:nth-child(3n) {
    height: 42px;
}

.grid tbody th {
    vertical-align: bottom;
    border-left: none;
    padding-bottom: 1px;
}

.grid tbody .picked {
    background: #d2d2d2;
    border-right: 2px solid #217346;
    color: #217346;
}

.grid td {
    padding: 0 1px 2px;
    border: 1px solid #d4d4d4;
    text-align: right;
    white-space: nowrap;
}

.grid .text {
    text-align: left;
}

.marks td:nth-child(-n+8) {
    border: 2px solid #000;
}

.marks td:nth-child(2) {
    border-left: 1px solid #c3c3c3;
}

.grid .titles td {
    font-weight: bold;
    border-top: none;
}

.titles td:not(.text) {
    padding: 0 0 2px;
    text-align: center;
}

.branch td {
    font-family: "DejaVu Sans", sans-serif;
    font-size: 11px;
    font-weight: bold;
}

.branch td:nth-child(n+3):nth-child(-n+7) {
    border: 2px solid #000;
    background: #d8e4bc;
}

.grid .shaded {
    background: #c5c5c5;
}

.selection {
    position: absolute;
    left: 429px;
    top: 347px;
    width: 158px;
    height: 43px;
    border: 2px solid #217346;
}

.selection::after {
    content: "";
    position: absolute;
    right: -3px;
    bottom: -3px;
    width: 5px;
    height: 5px;
    background: #217346;
    outline: 1px solid #fff;
}

.paste-options {
    position: absolute;
    left: 511px;
    top: 434px;
    height: 21px;
    gap: 2px;
    padding: 0 2px;
    background: #fff;
    border: 1px solid #ababab;
}

/* chart */
.chart {
    position: absolute;
    left: 589px;
    top: 28px;
    width: 451px;
    height: 271px;
    margin: 0;
    padding: 0 12px 0 6px;
    background: #fff;
    border: 1px solid #d9d9d9;
    font-family: Lato, "Open Sans", sans-serif;
    font-size: 11px;
    color: #555;
}

.chart figcaption {
    height: 44px;
    padding: 10px 0 0 101px;
    font-size: 19px;
    line-height: 30px;
}

.plot-row {
    display: flex;
    height: 170px;
}

.axis {
    width: 19px;
    margin-right: 10px;
    line-height: 16px;
    display: flex;
    flex-direction: column;
    text-align: right;
}

.plot {
    flex: 1;
    display: flex;
    height: 161px;
    margin-top: 8px;
    background: repeating-linear-gradient(#d9d9d9 0, #d9d9d9 1px, transparent 1px, transparent 16px);
}

.cluster {
    flex: 1;
    display: flex;
    align-items: flex-end;
    gap: 3px;
    padding: 0 12px 1px;
}

.bar {
    flex: 1;
}

.categories {
    display: flex;
    margin: 4px 0 0 28px;
    text-align: center;
}

.categories span {
    flex: 1;
}

.legend {
    display: flex;
    justify-content: center;
    gap: 10px;
    margin: 9px 0 0 2px;
}

.legend span {
    display: flex;
    align-items: center;
    gap: 3px;
}

.legend span::before {
    content: "";
    width: 6px;
    height: 6px;
    background: #4472c4;
}

.bar.s1 {
    background: #4472c4;
}

.bar.s2,
.legend .s2::before {
    background: #ed7d31;
}

.bar.s3,
.legend .s3::before {
    background: #a5a5a5;
}

.bar.s4,
.legend .s4::before {
    background: #ffc000;
}

/* scroll bars */
.v-scroll {
    width: 17px;
    padding: 2px 0 0 3px;
    display: flex;
    flex-direction: column;
}

.v-scroll button {
    height: 14px;
    background: #fff;
    border: 1px solid #ababab;
}

.v-thumb {
    height: 210px;
    margin-top: 1px;
    background: #fff;
    border: 1px solid #ababab;
}

.v-track {
    flex: 1;
    background: #dadada;
}

.spotlight {
    position: absolute;
    right: 3px;
    top: 306px;
    width: 46px;
    height: 55px;
    border-radius: 28px 18px 18px 28px;
    background: #ff0;
    mix-blend-mode: multiply;
}

.marker {
    position: absolute;
    right: 0;
    top: 335px;
    width: 3px;
    height: 33px;
    background: #d020d0;
}

.pointer {
    position: absolute;
    right: 9px;
    top: 335px;
}

/* sheet tabs */
.sheet-bar {
    display: flex;
    align-items: center;
    height: 26px;
    padding-right: 17px;
    border-bottom: 1px solid #c6c6c6;
}

.sheet-nav {
    display: flex;
    gap: 22px;
    width: 94px;
    padding-left: 25px;
}

.sheet-tab {
    align-self: flex-start;
    height: 23px;
    padding: 4px 9px 0;
    font-size: 12px;
    font-weight: bold;
    background: #fff;
    color: #217346;
    border: 1px solid #ababab;
    border-top: none;
    border-bottom: 2px solid #217346;
}

.add-sheet {
    margin-left: 30px;
}

.sheet-bar .dots {
    margin-left: auto;
}

.h-scroll {
    display: flex;
    width: 478px;
    height: 14px;
    background: #dadada;
}

.h-scroll button {
    width: 14px;
    background: #fff;
    border: 1px solid #ababab;
}

.h-thumb {
    flex: 1;
    background: #fff;
    border: 1px solid #ababab;
}

.h-track {
    width: 26px;
}

/* status bar */
.status-bar {
    display: flex;
    align-items: center;
    height: 21px;
    padding-left: 8px;
    background: #f3f3f3;
}

.ready {
    width: 46px;
}

.views {
    display: flex;
    align-self: stretch;
    margin-left: auto;
}

.views button {
    width: 38px;
}

.views .on {
    background: #c8c8c8;
}

.zoom {
    display: flex;
    align-items: center;
    gap: 5px;
    padding-left: 4px;
    padding-right: 3px;
}

.zoom span {
    margin-left: 7px;
}

.zoom input {
    appearance: none;
    width: 94px;
    height: 12px;
    background: linear-gradient(#aaa, #aaa) center / 100% 1px no-repeat;
}

.zoom input::-webkit-slider-thumb {
    appearance: none;
    width: 5px;
    height: 11px;
    background: #555;
}

/* taskbar */
.taskbar {
    display: flex;
    justify-content: space-between;
    height: 28px;
    background: linear-gradient(90deg, #25333a, #22303a 60%, #23282f 80%, #1b2a35);
    color: #fff;
}

.apps {
    display: flex;
}

.apps button {
    width: 34px;
    border-bottom: 2px solid transparent;
    border-top: 2px solid transparent;
}

.apps button:nth-child(n+5) {
    width: 26px;
    margin-left: 9px;
}

.apps button:nth-child(5) {
    margin-left: 6px;
}

.apps .open {
    border-bottom-color: #76b9ed;
}

.apps button.current {
    width: 34px;
    margin-left: 4px;
    background: #4b575e;
    background-clip: padding-box;
}

.tray {
    display: flex;
    align-items: center;
    gap: 9px;
    padding-right: 21px;
}

.clock {
    margin: 0 5px 0 3px;
}

.app-letter {
    font: bold 8px "Open Sans", sans-serif;
    fill: #fff;
}
```
